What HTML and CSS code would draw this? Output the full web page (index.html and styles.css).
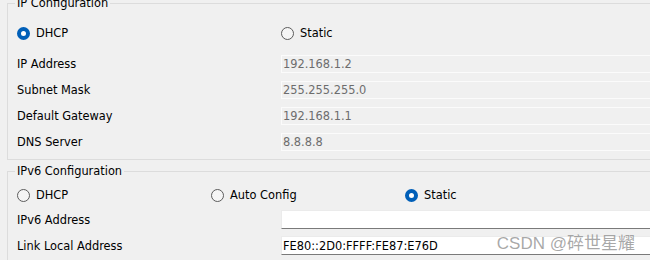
FILE: index.html
```html
<!DOCTYPE html>
<html lang="en">
<head>
    <meta charset="UTF-8">
    <title>IP Configuration</title>
    <link rel="stylesheet" href="styles.css">
</head>
<body>

<fieldset class="group group-ipv4">
    <legend>IP Configuration</legend>

    <div class="radio-row">
        <label class="radio col-1"><span class="dot checked"></span>DHCP</label>
        <label class="radio"><span class="dot"></span>Static</label>
    </div>

    <div class="row">
        <span class="col-1">IP Address</span>
        <div class="field disabled">192.168.1.2</div>
    </div>
    <div class="row">
        <span class="col-1">Subnet Mask</span>
        <div class="field disabled">255.255.255.0</div>
    </div>
    <div class="row">
        <span class="col-1">Default Gateway</span>
        <div class="field disabled">192.168.1.1</div>
    </div>
    <div class="row">
        <span class="col-1">DNS Server</span>
        <div class="field disabled">8.8.8.8</div>
    </div>
</fieldset>

<fieldset class="group group-ipv6">
    <legend>IPv6 Configuration</legend>

    <div class="radio-row">
        <label class="radio radio-dhcp6"><span class="dot"></span>DHCP</label>
        <label class="radio radio-auto"><span class="dot"></span>Auto Config</label>
        <label class="radio"><span class="dot checked"></span>Static</label>
    </div>

    <div class="row row-v6">
        <span class="col-1">IPv6 Address</span>
        <div class="field"></div>
    </div>
    <div class="row row-v6">
        <span class="col-1">Link Local Address</span>
        <div class="field">FE80::2D0:FFFF:FE87:E76D</div>
    </div>
</fieldset>

<div class="watermark">CSDN @碎世星耀</div>

</body>
</html>
```

FILE: styles.css
```css
body {
    font-family: 'DejaVu Sans', Verdana, sans-serif;
    font-size: 11.4px;
    background-color: #f0f0f0;
    color: #000;
    margin: 0;
    height: 260px;
    overflow: hidden;
    position: relative;
}
.group {
    border: 1px solid #dcdcdc;
    margin: 0 -20px 0 7px;
    padding: 0 0 0 9px;
    min-width: 0;
}
.group legend {
    padding: 0 2px;
    margin-left: -2px;
    line-height: 14px;
}
.group-ipv4 {
    margin-top: -4px;
    padding-bottom: 8px;
}
.group-ipv6 {
    margin-top: 4px;
    height: 200px;
}
.radio-row {
    display: flex;
    align-items: center;
    height: 20px;
    margin: 13px 0 12px;
}
.group-ipv6 .radio-row {
    margin: 7px 0 5px;
}
.radio {
    display: flex;
    align-items: center;
    gap: 6px;
}
.col-1 {
    width: 264px;
    flex: none;
}
.radio-dhcp6 {
    width: 194px;
}
.radio-auto {
    width: 194px;
}
.dot {
    box-sizing: border-box;
    width: 13px;
    height: 13px;
    border-radius: 50%;
    border: 1px solid #5c5c5c;
    background-color: #f5f5f5;
}
.dot.checked {
    border: 4px solid #005fb8;
    background-color: #fff;
}
.row {
    display: flex;
    align-items: center;
    height: 18px;
    margin-bottom: 8px;
}
.row:last-child {
    margin-bottom: 0;
}
.row-v6 {
    height: 19px;
    margin-bottom: 7px;
}
.field {
    box-sizing: border-box;
    flex: 1;
    height: 100%;
    padding: 0 1px;
    display: flex;
    align-items: center;
    background-color: #fff;
    border: 1px solid #ebebeb;
    border-bottom-color: #7a7a7a;
}
.field.disabled {
    background-color: #f0f0f0;
    border-color: #fbfbfb;
    color: #6d6d6d;
}
.watermark {
    position: absolute;
    right: 15px;
    bottom: 6px;
    font-family: 'Liberation Sans', 'Noto Sans CJK SC', sans-serif;
    font-size: 17px;
    color: rgba(140, 140, 140, 0.75);
}
```
